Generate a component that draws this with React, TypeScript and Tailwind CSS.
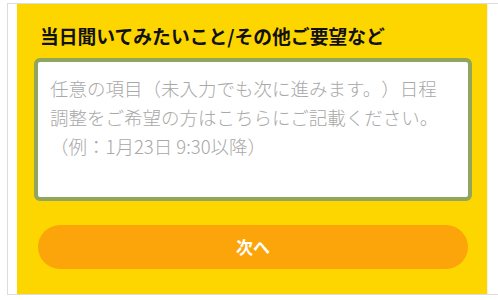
export default function App() {
  return (
    <div className="h-[300px] w-[498px] overflow-hidden bg-white font-['Noto_Sans_CJK_JP',sans-serif] [text-spacing-trim:space-all]">
      <div className="ml-[7px] mt-[3px] flex h-[292px] w-[520px] border border-[#dcdcdc] pl-[9px]">
        <section className="flex h-full w-[471px] flex-col border-r border-[#f2f2f2] bg-[#fdd600] pl-[17px] pr-[15px] pt-[19px]">
          <h2 className="h-[26px] pl-[6px] text-[18.8px] font-bold leading-[26px] text-[#111]">
            当日聞いてみたいこと/その他ご要望など
          </h2>
          <textarea
            className="mt-[9px] h-[143px] w-full resize-none rounded-[6px] border-[4px] border-[#8fa65c] bg-white px-[12px] pt-[12px] text-[18.5px] font-light leading-[29px] text-[#333] outline-none [text-spacing-trim:space-all] placeholder:text-[#a8a8a8]"
            placeholder={"任意の項目（未入力でも次に進みます。）日程\n調整をご希望の方はこちらにご記載ください。\n（例：1月23日 9:30以降）"}
          />
          <button className="mx-[4px] mt-[24px] h-[44px] rounded-full bg-[#fca50a] text-[17px] font-bold text-white">
            次へ
          </button>
        </section>
      </div>
    </div>
  );
}
